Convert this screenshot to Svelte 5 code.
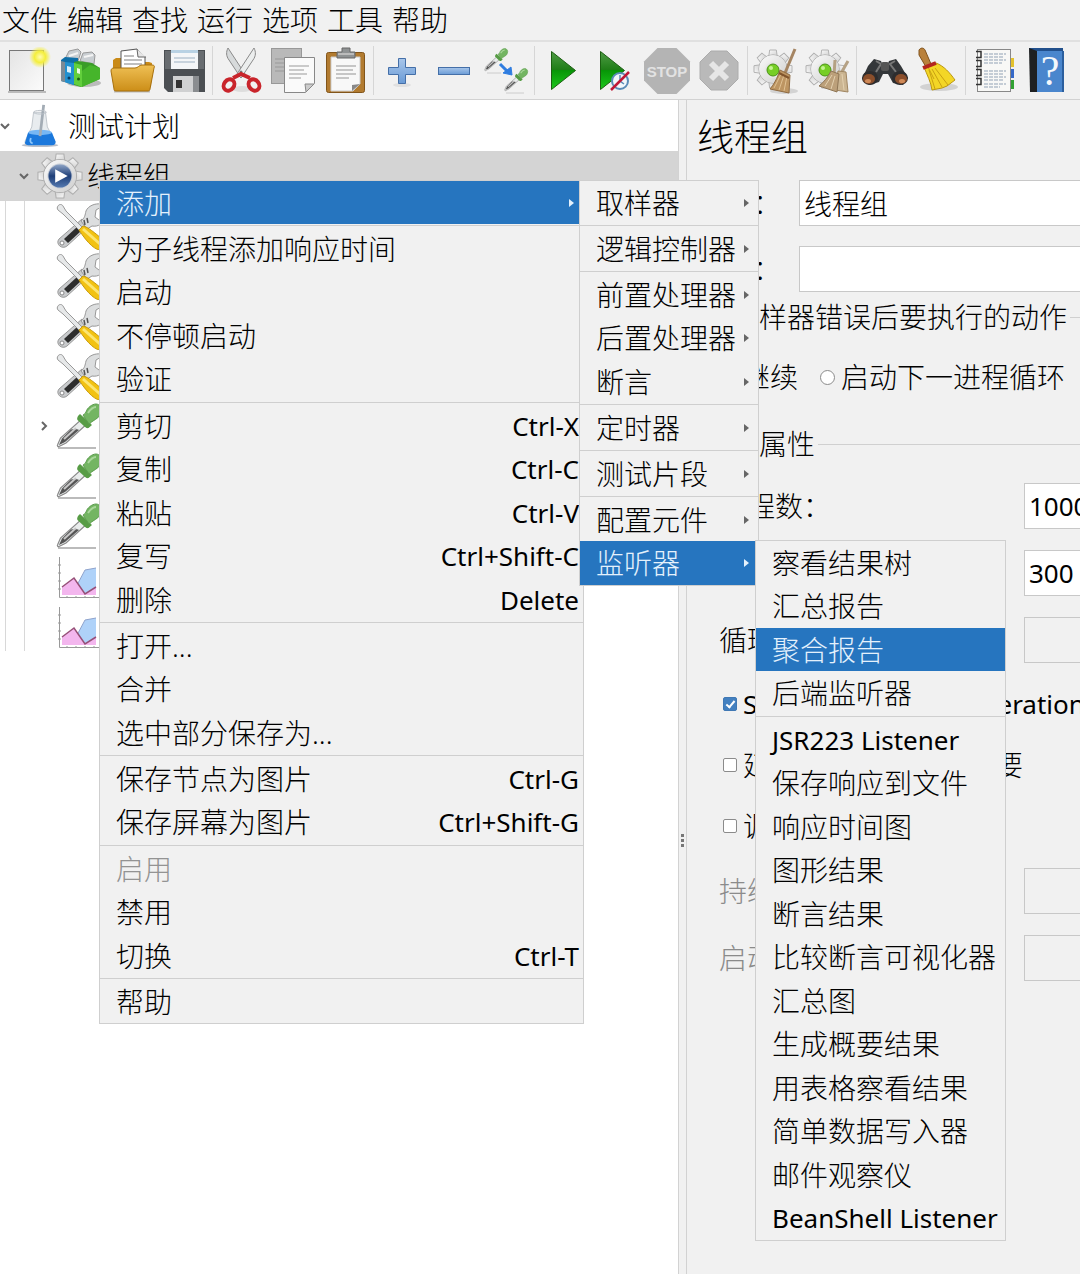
<script lang="ts">
  type Item = {
    label: string;
    keys?: string;
    disabled?: boolean;
    selected?: boolean;
    more?: boolean;
    children?: Item[][];
  };

  const menubar = ['文件', '编辑', '查找', '运行', '选项', '工具', '帮助'];

  const toolbar = [
    [
      { icon: 'new', title: '新建' },
      { icon: 'templates', title: '模板' },
      { icon: 'open', title: '打开' },
      { icon: 'save', title: '保存' },
    ],
    [
      { icon: 'cut', title: '剪切' },
      { icon: 'copy', title: '复制' },
      { icon: 'paste', title: '粘贴' },
    ],
    [
      { icon: 'expand', title: '全部展开' },
      { icon: 'collapse', title: '全部折叠' },
      { icon: 'toggle', title: '切换' },
    ],
    [
      { icon: 'start', title: '启动' },
      { icon: 'startNoPause', title: '不停顿启动' },
      { icon: 'stop', title: '停止' },
      { icon: 'shutdown', title: '关闭' },
    ],
    [
      { icon: 'clear', title: '清除' },
      { icon: 'clearAll', title: '清除全部' },
    ],
    [
      { icon: 'search', title: '查找' },
      { icon: 'reset', title: '重置查找' },
    ],
    [
      { icon: 'functions', title: '函数助手' },
      { icon: 'help', title: '帮助' },
    ],
  ];

  const treeIcons = ['tools', 'tools', 'tools', 'tools', 'dropper', 'dropper', 'dropper', 'chart', 'chart'];

  // 监听器子菜单
  const listeners: Item[][] = [
    [
      { label: '察看结果树' },
      { label: '汇总报告' },
      { label: '聚合报告', selected: true },
      { label: '后端监听器' },
    ],
    [
      { label: 'JSR223 Listener' },
      { label: '保存响应到文件' },
      { label: '响应时间图' },
      { label: '图形结果' },
      { label: '断言结果' },
      { label: '比较断言可视化器' },
      { label: '汇总图' },
      { label: '生成概要结果' },
      { label: '用表格察看结果' },
      { label: '简单数据写入器' },
      { label: '邮件观察仪' },
      { label: 'BeanShell Listener' },
    ],
  ];

  const addMenu: Item[][] = [
    [{ label: '取样器', more: true }],
    [{ label: '逻辑控制器', more: true }],
    [
      { label: '前置处理器', more: true },
      { label: '后置处理器', more: true },
      { label: '断言', more: true },
    ],
    [{ label: '定时器', more: true }],
    [{ label: '测试片段', more: true }],
    [
      { label: '配置元件', more: true },
      { label: '监听器', more: true, selected: true, children: listeners },
    ],
  ];

  const contextMenu: Item[][] = [
    [{ label: '添加', more: true, selected: true, children: addMenu }],
    [{ label: '为子线程添加响应时间' }, { label: '启动' }, { label: '不停顿启动' }, { label: '验证' }],
    [
      { label: '剪切', keys: 'Ctrl-X' },
      { label: '复制', keys: 'Ctrl-C' },
      { label: '粘贴', keys: 'Ctrl-V' },
      { label: '复写', keys: 'Ctrl+Shift-C' },
      { label: '删除', keys: 'Delete' },
    ],
    [{ label: '打开...' }, { label: '合并' }, { label: '选中部分保存为...' }],
    [
      { label: '保存节点为图片', keys: 'Ctrl-G' },
      { label: '保存屏幕为图片', keys: 'Ctrl+Shift-G' },
    ],
    [{ label: '启用', disabled: true }, { label: '禁用' }, { label: '切换', keys: 'Ctrl-T' }],
    [{ label: '帮助' }],
  ];

  let groupName = $state('线程组');
  let comment = $state('');
  let onError = $state('continue');
  let threads = $state('1000');
  let rampUp = $state('300');
  let sameUser = $state(true);
  let delayStart = $state(false);
  let scheduler = $state(false);

  const isLatin = (text: string) => /^[\x20-\x7e]+$/.test(text);
  const teeth = [0, 45, 90, 135, 180, 225, 270, 315];
</script>

{#snippet gear(cx: number, cy: number, r: number)}
  <g transform="translate({cx} {cy}) scale({r / 20})" fill="url(#metal)" stroke="#b0b0b0" stroke-width="1">
    {#each teeth as a (a)}
      <path d="M-4.500-13 L-3.500-20 H3.500 L4.500-13z" transform="rotate({a})" />
    {/each}
    <circle r="15" />
    <circle r="14.500" stroke="none" />
  </g>
{/snippet}

{#snippet pipette()}
  <path d="M3 41.500c-1 .5-2-.5-1.500-1.500l3-7L27 13l5 5-22 20z" fill="#e9ecec" stroke="#8a8a8a" stroke-width="1.200" />
  <path d="M3 40l3-6.500 9-9c3-1 6-.5 8 .5L9 37z" fill="#555" />
  <path d="M8 34L20 23" stroke="#c8c8c8" stroke-width="2" />
  <path d="M24 9l12 11-3.500 3c-2 .5-3-.5-4-1.500l-6.500-6c-1.500-1.500-1-4 2-6.500z" fill="#579c45" />
  <path d="M27 10c1-1 2-1 3-3 1-4 6-8 10-8s7 5 5 9c-1 4-5 6-8 8-2 1-3 3-4 3z" fill="#73b562" stroke="#5c9c4e" />
  <path d="M32 8c2-3 4-6 8-6" stroke="#a9d79b" stroke-width="2" fill="none" />
{/snippet}

{#snippet icon(name: string)}
  <svg viewBox="0 0 48 48" aria-hidden="true">
    {#if name === 'new'}
      <path d="M4 45h38" stroke="#bbb" stroke-width="2" />
      <rect x="5.500" y="3.500" width="34" height="40" fill="url(#sheet)" stroke="#777" />
      <circle cx="36" cy="10" r="11" fill="url(#glow)" />
    {:else if name === 'templates'}
      <ellipse cx="28" cy="36" rx="17" ry="4" fill="#bbb" />
      <path d="M9 12l4-8 9-2 3 3-3 9zM24 14l3-8 9-1 3 3-1 9z" fill="#c9ced2" stroke="#999" />
      <path d="M13 9l9-3M28 10l9-2" stroke="#f4f4f4" stroke-width="2" />
      <path d="M5 13l4-3 13 1v26l-4 1L5 34z" fill="#0f6fa8" />
      <path d="M5 14l4 1v20l-4-1z" fill="#7b8a95" />
      <path d="M9 15l9 1v22l-9-3z" fill="#2190cf" />
      <path d="M11 19l4 1v6l-4-1z" fill="#d8f0fb" />
      <path d="M18 15l4-1 14 2 8 5v11L25 40l-7-2z" fill="#3a9c28" />
      <path d="M18 16l8 2v22l-8-3z" fill="#62cf3c" />
      <path d="M26 24l8-6 10 3v11l-18 8z" fill="#46b52b" />
      <path d="M21 21l3 1v5l-3-1z" fill="#eafbe2" />
      <circle cx="22.500" cy="32" r="1.500" fill="#1b6412" />
      <circle cx="13" cy="31" r="1.500" fill="#0a3b60" />
    {:else if name === 'open'}
      <path d="M6 44h36" stroke="#bbb" stroke-width="3" />
      <path d="M5 22V13l3-2h9l3 4h21l3 1-1 24H7z" fill="#c98a17" />
      <path d="M13 4l16-2 8 8v18H13z" fill="#fff" stroke="#555" />
      <path d="M29 2l1 8h8" fill="#e6e6e6" stroke="#666" />
      <path d="M16 9h10M16 13h18M16 17h18" stroke="#aaa" stroke-width="1.500" />
      <path d="M3 24c0-2 1-3 3-3h21c3 0 4-3 7-3h10c2 0 3 1 2 3l-4 21c0 1-1 2-2 2H8c-2 0-2-1-2-2z" fill="url(#folder)" stroke="#a8700c" />
    {:else if name === 'save'}
      <path d="M4 3h41v42H8l-4-4z" fill="#4b4f53" />
      <path d="M5 4h6v18H5zM38 4h6v18h-6z" fill="#686c70" />
      <rect x="11" y="3" width="27" height="19" fill="#f4f6f8" />
      <path d="M11 3h27v3H11z" fill="#b9d2e4" />
      <path d="M14 11h21M14 15h21" stroke="#b9c8d4" stroke-width="1.500" />
      <path d="M13 29h26v16H13z" fill="#8a8d90" />
      <path d="M13 29h20v16H13z" fill="#d0d1d2" />
      <rect x="16" y="33" width="6" height="8" fill="#333" />
    {:else if name === 'cut'}
      <ellipse cx="25" cy="42" rx="10" ry="3" fill="#ddd" />
      <path d="M11 1c-2 4-2 8 1 12l12 18 4-4z" fill="#d7dadb" stroke="#8a8a8a" />
      <path d="M37 1c2 4 2 8-1 12L24 31l-4-4z" fill="#eceeee" stroke="#8a8a8a" />
      <circle cx="24" cy="25" r="1.500" fill="#777" />
      <ellipse cx="12" cy="38" rx="5" ry="6" transform="rotate(38 12 38)" fill="none" stroke="#c9242b" stroke-width="4" />
      <ellipse cx="37" cy="38" rx="5" ry="6" transform="rotate(-38 37 38)" fill="none" stroke="#c9242b" stroke-width="4" />
      <path d="M16 31l8-4 9 4" fill="none" stroke="#c9242b" stroke-width="4" />
    {:else if name === 'copy'}
      <rect x="2.500" y="1.500" width="30" height="35" fill="#b9b9b9" stroke="#989898" />
      <path d="M6 12h9M6 16h9M6 20h9M6 24h9" stroke="#999" />
      <path d="M15.500 10.500h30v26l-9 9h-21z" fill="#fafafa" stroke="#888" />
      <path d="M45 37l-8 8-1-8z" fill="#ccc" stroke="#888" />
      <path d="M20 19h20M20 23h15M20 27h18M20 31h12" stroke="#bbb" stroke-width="1.500" />
    {:else if name === 'paste'}
      <rect x="5.500" y="5.500" width="38" height="40" rx="2" fill="#b27b30" stroke="#82551a" />
      <path d="M10 10h29v27l-7 7H10z" fill="#f8f8f8" stroke="#ccc" />
      <path d="M39 37l-8 7v-6z" fill="#888" />
      <path d="M15 19h20M15 23h17M15 27h20M15 31h13" stroke="#b5b5b5" stroke-width="1.500" />
      <path d="M16 11V5h5V1h8v4h5v6z" fill="#8f9293" stroke="#666" />
      <path d="M17 7h16" stroke="#bbb" stroke-width="2" />
    {:else if name === 'expand'}
      <ellipse cx="24" cy="38" rx="9" ry="2" fill="#e0e0e0" />
      <path d="M20.500 11.500h7v9h10v7h-10v9h-7v-9h-10v-7h10z" fill="url(#blue)" stroke="#446fa8" />
    {:else if name === 'collapse'}
      <rect x="8.500" y="20.500" width="31" height="7" fill="url(#blue)" stroke="#446fa8" />
    {:else if name === 'toggle'}
      <g transform="translate(2 2) scale(.52)">{@render pipette()}</g>
      <g transform="translate(22 22) scale(.52)">{@render pipette()}</g>
      <path d="M5 26h14M24 46h18" stroke="#ccc" />
      <path d="M18 17l7 7" stroke="#2f7de0" stroke-width="3" />
      <path d="M21 26l8-6 1 8z" fill="#2f7de0" stroke="#2f7de0" />
    {:else if name === 'start'}
      <path d="M12.500 4.500v38l24-19z" fill="url(#play)" stroke="#1c5f12" />
    {:else if name === 'startNoPause'}
      <path d="M9.500 4.500v38l24-19z" fill="url(#play)" stroke="#1c5f12" />
      <circle cx="29" cy="34" r="8" fill="#f2f7fb" stroke="#5b8cb8" stroke-width="2" />
      <path d="M29 28v6l4 3" fill="none" stroke="#5b8cb8" stroke-width="1.500" />
      <path d="M20 43l18-18" stroke="#c01836" stroke-width="2.500" />
    {:else if name === 'stop'}
      <path d="M14.500 1h19L47 14.500v19L33.500 47h-19L1 33.500v-19z" fill="#b4b4b4" />
      <text x="24" y="30" text-anchor="middle" class="stop-text">STOP</text>
    {:else if name === 'shutdown'}
      <path d="M16 4h16l11 11v17L32 43H16L5 32V15z" fill="#b9b9b9" stroke="#acacac" />
      <path d="M16 16l16 16M32 16L16 32" stroke="#e6e6e6" stroke-width="6" />
    {:else if name === 'clear' || name === 'clearAll'}
      {@render gear(21, 22, 19)}
      <circle cx="21" cy="23" r="8" fill="#e6e6e6" />
      <circle cx="21" cy="23" r="6" fill="#76ce26" stroke="#4b9217" />
      <circle cx="19" cy="21" r="2" fill="#c4f293" />
      {#if name === 'clear'}
        <ellipse cx="32" cy="44" rx="14" ry="3" fill="#d3d3d3" />
        <path d="M43 2L33 26" stroke="#a58563" stroke-width="3" />
        <path d="M28 23l10 5-1 18-19-4c4-5 7-10 10-19z" fill="#bd9562" stroke="#8f6b42" />
        <path d="M29 27l-7 14M32 28l-5 15M35 29l-3 15" stroke="#e0c193" />
        <path d="M27 26l10 5" stroke="#80542c" stroke-width="2" />
      {:else}
        <path d="M31 13l-1 15M44 14l-8 14" stroke="#b5a184" stroke-width="3" />
        <path d="M34 24l8 1 2 20-13-2z" fill="#cbb592" stroke="#a08662" />
        <path d="M27 24l8 3-2 18-18-6c5-4 9-9 12-15z" fill="#bca07a" stroke="#8f7656" />
        <path d="M28 28l-7 11M31 29l-4 13M38 27l2 16" stroke="#e4d1b0" />
      {/if}
    {:else if name === 'search'}
      <path d="M13 12l7 2 2 5h4l2-5 7-2 5 7 7 12-5 7-10-2-5-9h-5l-4 8-10 3-7-6 6-13z" fill="#34373a" />
      <path d="M15 14l5 3-5 8M34 14l-5 3 6 8" stroke="#777" stroke-width="2" fill="none" />
      <rect x="20" y="15" width="8" height="9" rx="2" fill="#555" />
      <ellipse cx="9" cy="31" rx="8" ry="7" fill="#2c2c2e" />
      <ellipse cx="39" cy="31" rx="8" ry="7" fill="#2c2c2e" />
      <ellipse cx="8" cy="32" rx="6" ry="5" fill="#8a4e2b" />
      <ellipse cx="40" cy="32" rx="6" ry="5" fill="#8a4e2b" />
      <ellipse cx="7" cy="34" rx="3" ry="2" fill="#d08a58" />
      <ellipse cx="41" cy="34" rx="3" ry="2" fill="#d08a58" />
    {:else if name === 'reset'}
      <ellipse cx="26" cy="40" rx="19" ry="4" fill="#d2d2d2" />
      <path d="M6 3c2-3 5-2 6 0l6 14-5 3L6 8z" fill="#b9813c" stroke="#80531d" />
      <path d="M11 20l12-4c8 3 14 10 19 17l-4 3-4 3-5 2-5 1-5 1c-1-8-5-15-8-23z" fill="#f3d626" stroke="#bb9711" />
      <path d="M16 23l6 19M19 22l10 18M22 21l13 17M15 20l6 12" stroke="#c9a112" fill="none" />
      <path d="M10 21l13-5" stroke="#b3251f" stroke-width="4" />
    {:else if name === 'functions'}
      <path d="M38 11h6v9h-6z" fill="#e3c12c" />
      <path d="M38 22h6v9h-6z" fill="#3568c7" />
      <path d="M38 33h6v9h-6z" fill="#31a132" />
      <rect x="7.500" y="2.500" width="33" height="42" fill="#f8f8f6" stroke="#888" />
      <path d="M14 7h22M14 10h20M14 13h22M14 16h18M14 24h22M14 27h20M14 30h22M14 33h19M14 37h22M14 40h16" stroke="#91a2b5" stroke-dasharray="4 1" />
      <path d="M6 4.500h5v6H6M6 13.500h5v6H6M6 22.500h5v6H6M6 31.500h5v6H6" stroke="#333" fill="none" stroke-width="1.500" />
    {:else if name === 'help'}
      <path d="M8 1h33l1 44H8z" fill="#4a86cd" />
      <path d="M7 1h8v44H8z" fill="#1e2022" />
      <path d="M7 1h34v3H15z" fill="#22508c" />
      <path d="M41 4v41" stroke="#2b5f9e" stroke-width="2" />
      <text x="28" y="38" text-anchor="middle" class="help-text">?</text>
    {:else if name === 'flask'}
      <ellipse cx="24" cy="45" rx="20" ry="2" fill="#b8bdc8" />
      <path d="M17 9h13l2 16 8 15c1 3 0 5-3 5H11c-3 0-4-2-3-5l7-15z" fill="#e8ecef" stroke="#bcc3c9" />
      <path d="M11 31h26l4 10c0 3-1 4-4 4H11c-3 0-4-2-3-4z" fill="#1b78dc" />
      <ellipse cx="24" cy="31" rx="13" ry="3" fill="#77b7f4" />
      <path d="M14 37c-1 3-1 5 2 6" stroke="#8cc6fb" stroke-width="2" fill="none" />
      <path d="M28 1l-4 34" stroke="#a3acb5" stroke-width="3" />
      <ellipse cx="24" cy="9" rx="7" ry="2" fill="none" stroke="#bac1c7" />
    {:else if name === 'group'}
      {@render gear(24, 24, 23)}
      <circle cx="24" cy="24" r="13" fill="#c4cbd6" />
      <circle cx="24" cy="24" r="12" fill="url(#orb)" />
      <path d="M19 17v14l13-7z" fill="#fff" />
    {:else if name === 'tools'}
      <path d="M4 37L27 17l8 6-23 21c-5 4-12-2-8-7z" fill="#c9cbcd" stroke="#999" />
      <path d="M9 37l13-12 4 4-13 12z" fill="#2d2d2d" />
      <circle cx="7" cy="41" r="2" fill="#fff" stroke="#888" />
      <path d="M26 19c4-3 4-6 5-10 2-5 9-8 15-7l2 2-7 4-1 7 4 3 5-2c-1 6-6 9-12 8l-5 3z" fill="#dcdedf" stroke="#999" />
      <path d="M29 18l1 5M32 16l1 5" stroke="#555" stroke-width="1.500" />
      <path d="M3 4c1-2 4-2 5 0l3 5 17 17-3 3L8 12 3 8c-1-1-1-3 0-4z" fill="#e6e8e9" stroke="#999" />
      <path d="M24 28l4-4c5 1 12 7 19 13v11c-6 1-14-6-23-20z" fill="#f2c213" stroke="#c89a0c" />
      <path d="M28 27l17 15" stroke="#fbe573" stroke-width="3" />
    {:else if name === 'dropper'}
      <path d="M3 46h38" stroke="#bbb" stroke-width="2" />
      <g transform="translate(1 3)">{@render pipette()}</g>
    {:else if name === 'chart'}
      <path d="M21 35l9-17 11-2v26H24z" fill="#afd2f9" />
      <path d="M21 35l9-17 11-2" stroke="#8fa3cc" fill="none" />
      <path d="M7 35l12-9 11 16 11-7v8H7z" fill="#f3b6ee" />
      <path d="M7 35l12-9 11 16 11-7" stroke="#975078" stroke-width="1.500" fill="none" />
      <path d="M4.500 5v40.500H46M3 13h3M3 21h3M3 29h3M3 37h3M12 46v-2M21 46v-2M30 46v-2M39 46v-2" stroke="#999" fill="none" />
    {/if}
  </svg>
{/snippet}

{#snippet menu(groups: Item[][], kind: string)}
  <div class="menu {kind}" role="menu">
    {#each groups as group, i (i)}
      <ul>
        {#each group as item (item.label)}
          <li>
            <button
              role="menuitem"
              class:selected={item.selected}
              class:latin={isLatin(item.label)}
              disabled={item.disabled}
            >
              <span>{item.label}</span>
              {#if item.keys}<kbd>{item.keys}</kbd>{/if}
              {#if item.more}<i class="arrow"></i>{/if}
            </button>
            {#if item.children}
              {@render menu(item.children, kind === 'context' ? 'add' : 'listeners')}
            {/if}
          </li>
        {/each}
      </ul>
    {/each}
  </div>
{/snippet}

<svg class="defs" aria-hidden="true">
  <defs>
    <linearGradient id="metal" x1="0" y1="0" x2="1" y2="1"><stop stop-color="#fafafa" /><stop offset="1" stop-color="#cfcfcf" /></linearGradient>
    <linearGradient id="sheet" x1="0" y1="0" x2="1" y2="1"><stop stop-color="#e4e4e4" /><stop offset="1" stop-color="#fbfbfb" /></linearGradient>
    <radialGradient id="glow"><stop stop-color="#fffbb0" /><stop offset=".5" stop-color="#f4ee3c" /><stop offset="1" stop-color="#f4ee3c" stop-opacity="0" /></radialGradient>
    <linearGradient id="folder" x1="0" y1="0" x2="0" y2="1"><stop stop-color="#efc055" /><stop offset="1" stop-color="#cc8e18" /></linearGradient>
    <linearGradient id="blue" x1="0" y1="0" x2="0" y2="1"><stop stop-color="#a8c6ea" /><stop offset="1" stop-color="#6a9bd6" /></linearGradient>
    <linearGradient id="play" x1="0" y1="0" x2="0" y2="1"><stop stop-color="#4f9c45" /><stop offset=".48" stop-color="#1f7d17" /><stop offset=".5" stop-color="#079607" /><stop offset="1" stop-color="#1cc81c" /></linearGradient>
    <linearGradient id="orb" x1="0" y1="0" x2="0" y2="1"><stop stop-color="#8ea4c6" /><stop offset=".5" stop-color="#1f3f78" /><stop offset="1" stop-color="#5579b0" /></linearGradient>
  </defs>
</svg>

<div class="app">
  <nav class="menubar">
    {#each menubar as name (name)}
      <button>{name}</button>
    {/each}
  </nav>

  <div class="toolbar" role="toolbar">
    {#each toolbar as group, i (i)}
      <div class="tool-group">
        {#each group as tool (tool.icon)}
          <button title={tool.title} aria-label={tool.title}>{@render icon(tool.icon)}</button>
        {/each}
      </div>
    {/each}
  </div>

  <div class="workspace">
    <aside class="tree">
      <div class="node root">
        <svg class="chevron" viewBox="0 0 10 10"><path d="M1 3l4 4 4-4" /></svg>
        {@render icon('flask')}
        <span>测试计划</span>
      </div>
      <div class="node current">
        <svg class="chevron" viewBox="0 0 10 10"><path d="M1 3l4 4 4-4" /></svg>
        {@render icon('group')}
        <span>线程组</span>
        {@render menu(contextMenu, 'context')}
      </div>
      <div class="branch">
        {#each treeIcons as name, i (i)}
          <div class="node leaf">
            {#if i === 4}
              <svg class="chevron" viewBox="0 0 10 10"><path d="M3 1l4 4-4 4" /></svg>
            {/if}
            {@render icon(name)}
          </div>
        {/each}
      </div>
    </aside>

    <div class="splitter"><i></i><i></i><i></i></div>

    <main>
      <h1>线程组</h1>

      <div class="field name">
        <label for="name">名称：</label>
        <input id="name" type="text" bind:value={groupName} />
      </div>
      <div class="field name">
        <label for="comment">注释：</label>
        <input id="comment" type="text" bind:value={comment} />
      </div>

      <fieldset class="errors">
        <legend>在取样器错误后要执行的动作</legend>
        <label><input type="radio" value="continue" bind:group={onError} />继续</label>
        <label><input type="radio" value="next" bind:group={onError} />启动下一进程循环</label>
      </fieldset>

      <fieldset class="props">
        <legend>线程属性</legend>
        <div class="field">
          <label for="threads">线程数：</label>
          <input id="threads" class="latin" type="text" bind:value={threads} />
        </div>
        <div class="field">
          <label for="ramp">Ramp-Up时间（秒）：</label>
          <input id="ramp" class="latin" type="text" bind:value={rampUp} />
        </div>
        <div class="field">
          <label for="loops">循环次数</label>
          <input id="loops" type="text" disabled />
        </div>
        <div class="checks">
          <label class="latin"><input type="checkbox" bind:checked={sameUser} />Same user on each iteration</label>
          <label><input type="checkbox" bind:checked={delayStart} />延迟创建线程直到需要</label>
          <label><input type="checkbox" bind:checked={scheduler} />调度器</label>
        </div>
        <div class="field off">
          <label for="duration">持续时间（秒）</label>
          <input id="duration" type="text" disabled />
        </div>
        <div class="field off">
          <label for="delay">启动延迟（秒）</label>
          <input id="delay" type="text" disabled />
        </div>
      </fieldset>
    </main>
  </div>
</div>

<style>
  :global(body) {
    margin: 0;
    background: #f1f1f1;
  }

  .defs {
    position: absolute;
    width: 0;
    height: 0;
  }

  .app {
    display: flex;
    flex-direction: column;
    min-height: 100vh;
    overflow: hidden;
    color: #000;
    font-family: 'Noto Sans', 'Noto Sans CJK SC', sans-serif;
    font-size: 28px;
    font-weight: 300;
    line-height: 40px;
    white-space: nowrap;
  }

  button,
  input,
  kbd {
    font: inherit;
    color: inherit;
  }

  button {
    padding: 0;
    border: none;
    background: none;
  }

  .latin,
  kbd {
    font-size: 26px;
    font-weight: 400;
  }

  .menubar {
    display: flex;
    gap: 9px;
    padding: 0 2px;
    border-bottom: 2px solid #e0e0e0;
  }

  .toolbar {
    display: flex;
    padding: 4px 2px;
    border-bottom: 1px solid #d2d2d2;
  }

  .tool-group {
    display: flex;
  }

  .tool-group + .tool-group {
    margin-left: 2px;
    padding-left: 2px;
    border-left: 1px solid #d6d6d6;
  }

  .toolbar button {
    width: 52px;
    height: 49px;
  }

  svg {
    display: block;
    flex: none;
    width: 48px;
    height: 48px;
  }

  .toolbar svg {
    margin: 0 auto;
  }

  .stop-text {
    fill: #e2e2e2;
    font-family: 'Liberation Sans', sans-serif;
    font-size: 15px;
    font-weight: bold;
  }

  .help-text {
    fill: #f4f8fc;
    font-family: 'Liberation Serif', serif;
    font-size: 42px;
  }

  .workspace {
    flex: 1;
    display: flex;
  }

  .tree {
    flex: none;
    width: 63%;
    box-sizing: border-box;
    max-width: 678px;
    padding-top: 1px;
    background: #fff;
  }

  .node {
    position: relative;
    display: flex;
    align-items: center;
    height: 50px;
  }

  .node .chevron {
    width: 10px;
    height: 10px;
    fill: none;
    stroke: #666;
    stroke-width: 2;
  }

  .root svg + svg {
    width: 44px;
    height: 44px;
    margin: 0 6px 0 8px;
  }

  .current {
    padding-left: 19px;
    background: #d4d4d4;
  }

  .current > svg + svg {
    width: 46px;
    height: 46px;
    margin: 0 4px 0 8px;
  }

  .branch {
    margin-left: 5px;
    border-left: 1px solid #d8d8d8;
  }

  .leaf {
    justify-content: flex-end;
    width: 78px;
    margin-left: 18px;
    border-left: 1px solid #d8d8d8;
  }

  .leaf .chevron {
    margin-right: 6px;
  }

  .splitter {
    flex: none;
    display: flex;
    flex-direction: column;
    justify-content: center;
    align-items: center;
    gap: 2px;
    width: 7px;
    padding-top: 306px;
    border: solid #d2d2d2;
    border-width: 0 1px;
  }

  .splitter i {
    width: 3px;
    height: 3px;
    background: #777;
  }

  main {
    flex: 1;
    min-width: 0;
    padding: 11px 0 0 10px;
  }

  h1 {
    margin: 0 0 17px;
    font-size: 37px;
    font-weight: inherit;
    line-height: 52px;
  }

  .field {
    display: flex;
    align-items: center;
    margin-bottom: 21px;
  }

  .field label {
    flex: none;
    width: 305px;
  }

  .name label {
    width: 102px;
  }

  .name {
    margin-bottom: 20px;
  }

  input[type='text'] {
    flex: 1;
    box-sizing: border-box;
    min-width: 0;
    height: 46px;
    padding: 0 0 0 4px;
    border: 1px solid #c8c8c8;
    border-right: none;
    background: #fff;
  }

  input[type='text']:disabled {
    background: #f1f1f1;
  }

  fieldset {
    min-width: 0;
    margin: 0;
    padding: 0 0 0 24px;
    border: none;
    border-top: 1px solid #d0d0d0;
  }

  legend {
    margin-left: -18px;
    padding: 0 3px 0 0;
  }

  .errors {
    display: flex;
    gap: 22px;
    margin-top: -15px;
    padding-top: 20px;
    padding-bottom: 27px;
  }

  .props {
    padding: 19px 0 0 22px;
  }

  .props legend {
    margin-left: -16px;
  }

  label {
    display: flex;
    align-items: center;
  }

  input[type='radio'],
  input[type='checkbox'] {
    appearance: none;
    box-sizing: border-box;
    flex: none;
    width: 15px;
    height: 15px;
    margin: 0 6px 0 0;
    border: 1px solid #8b8b8b;
    background: #fff;
  }

  input[type='radio'] {
    border-radius: 50%;
  }

  input[type='checkbox'] {
    width: 14px;
    height: 14px;
    margin: 0 6px 0 4px;
    border-radius: 2px;
  }

  input[type='checkbox']:checked {
    display: grid;
    place-items: center;
    border-color: #4078b4;
    background: #4380c0;
  }

  input[type='checkbox']:checked::after {
    content: '';
    width: 3px;
    height: 7px;
    margin-bottom: 2px;
    border: solid #fff;
    border-width: 0 2px 2px 0;
    transform: rotate(40deg);
  }

  .checks {
    display: grid;
    gap: 21px;
    margin-bottom: 22px;
  }

  .off {
    color: #8b8b8b;
  }

  .menu {
    position: absolute;
    z-index: 1;
    box-sizing: border-box;
    border: 1px solid #cfcfcf;
    background: #f1f1f1;
    color: #000;
  }

  .context {
    top: 29px;
    left: 99px;
    min-width: 485px;
  }

  .add {
    top: -1px;
    left: calc(100% - 4px);
    min-width: 180px;
  }

  .listeners {
    top: -1px;
    left: calc(100% - 3px);
    min-width: 251px;
  }

  ul {
    margin: 0;
    padding: 0;
    list-style: none;
  }

  ul + ul {
    margin-top: 1px;
    padding-top: 1px;
    border-top: 1px solid #cfcfcf;
  }

  li {
    position: relative;
    height: 43px;
  }

  li:nth-child(even) {
    height: 44px;
  }

  li button {
    display: flex;
    align-items: center;
    width: 100%;
    height: 100%;
    padding: 0 4px 0 16px;
    text-align: left;
  }

  li button:disabled {
    color: #939393;
  }

  .selected {
    background: #2675bf;
    color: #e4f1fc;
  }

  kbd {
    margin-left: auto;
  }

  .arrow {
    margin: 0 5px 0 auto;
    border: solid transparent;
    border-width: 4px 0 4px 5px;
    border-left-color: #666;
  }

  .selected .arrow {
    border-left-color: #e4f1fc;
  }
</style>
